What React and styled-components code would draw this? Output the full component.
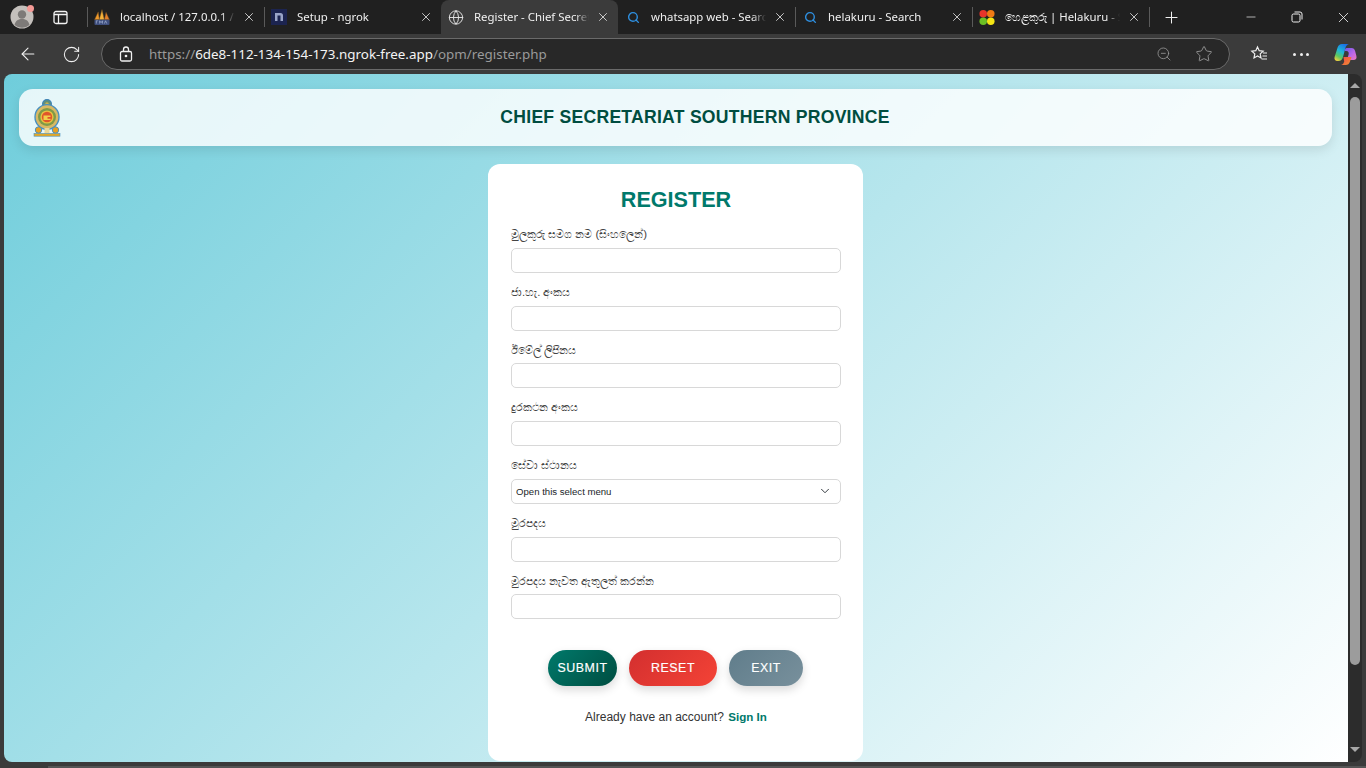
import React from 'react'
import styled, { createGlobalStyle } from 'styled-components'
import { ChevronDown, Globe, Search, X, Plus, RotateCw, ArrowLeft, ZoomOut, Star, Minus } from 'lucide-react'

const GlobalStyle = createGlobalStyle`
  html, body { margin: 0; padding: 0; height: 100%; overflow: hidden; background: #3b3b3b; }
  * { box-sizing: border-box; }
`

const PmaIcon = () => (
  <svg width="17" height="17" viewBox="0 0 17 17">
    <path d="M0.500 11 L4.500 2.500 L5.800 11Z" fill="#f09a2a" stroke="#6b4a20" strokeWidth="0.500" />
    <path d="M5.500 11 L8.500 0 L11 11Z" fill="#f6b23a" stroke="#6b4a20" strokeWidth="0.500" />
    <path d="M11 11 L12.800 3 L16.500 11Z" fill="#e4802a" stroke="#6b4a20" strokeWidth="0.500" />
    <rect x="0.500" y="11" width="16" height="5.500" rx="1" fill="#3f4f7e" />
    <path d="M2.500 15v-3h1.500M6 15v-3l1.500 2 1.500-2v3M11 15l1.300-3 1.300 3" fill="none" stroke="#aab8d8" strokeWidth="0.700" />
  </svg>
)

const NgrokIcon = () => (
  <NgrokBox>
    <svg width="10" height="10" viewBox="0 0 10 10">
      <path d="M1 9V1h5.500a2.500 2.500 0 0 1 2.500 2.500V9H6.500V3.500H3.500V9Z" fill="#9aa5c8" />
    </svg>
  </NgrokBox>
)

const HelakuruIcon = () => (
  <svg width="17" height="17" viewBox="0 0 17 17">
    <circle cx="4.500" cy="4.500" r="4" fill="#e8342a" />
    <circle cx="12.500" cy="4.500" r="4" fill="#f07a14" />
    <circle cx="4.500" cy="12.500" r="4" fill="#6cc024" />
    <circle cx="12.500" cy="12.500" r="4" fill="#f4e414" />
  </svg>
)

const BlueSearch = () => <Search size={13} color="#2e8fe0" strokeWidth={2.6} />

const tabs = [
  { id: 1, title: 'localhost / 127.0.0.1 / localhost', icon: <PmaIcon /> },
  { id: 2, title: 'Setup - ngrok', icon: <NgrokIcon /> },
  { id: 3, title: 'Register - Chief Secretariat', icon: <Globe size={17} color="#e6e6e6" strokeWidth={1.4} />, active: true },
  { id: 4, title: 'whatsapp web - Search', icon: <BlueSearch />, inset: true, noSep: true },
  { id: 5, title: 'helakuru - Search', icon: <BlueSearch />, inset: true },
  { id: 6, title: 'හෙළකුරු | Helakuru - Sinhala', icon: <HelakuruIcon /> },
]

const fields = [
  { label: 'මුලකුරු සමග නම (සිංහලෙන්)' },
  { label: 'ජා.හැ. අංකය' },
  { label: 'ඊමේල් ලිපිනය' },
  { label: 'දුරකථන අංකය' },
  { label: 'සේවා ස්ථානය', select: true },
  { label: 'මුරපදය' },
  { label: 'මුරපදය නැවත ඇතුලත් කරන්න' },
]

const Emblem = () => (
  <svg width="28" height="38" viewBox="0 0 28 38">
    <circle cx="14" cy="5" r="4.400" fill="#5f8f7a" stroke="#3f83b5" strokeWidth="1.200" />
    <circle cx="14" cy="5" r="1.800" fill="#c9b24e" />
    <ellipse cx="14" cy="18" rx="12" ry="12.400" fill="#d8b964" stroke="#4a90c0" strokeWidth="1.400" />
    <circle cx="14" cy="18" r="9" fill="#7f9a48" />
    <circle cx="14" cy="18" r="6.600" fill="#e9c040" />
    <circle cx="14" cy="18" r="5.200" fill="#e0562a" />
    <path d="M10.500 16.500h7v1.600h-3v1.600h3v1.400h-7Z" fill="#f2cf4a" />
    <rect x="11.500" y="29" width="5" height="5" fill="#e8d79a" />
    <circle cx="5.500" cy="31" r="3.200" fill="#e8a020" stroke="#4a90c0" />
    <circle cx="22.500" cy="31" r="3.200" fill="#e8a020" stroke="#4a90c0" />
    <rect x="1" y="34.400" width="26" height="2.800" fill="#e0a828" stroke="#4a90c0" strokeWidth="0.600" />
  </svg>
)

const CopilotIcon = () => (
  <svg width="23" height="23" viewBox="0 0 23 23">
    <defs>
      <linearGradient id="cpA" x1="0.700" y1="0" x2="0.200" y2="1">
        <stop offset="0" stopColor="#1a6fe8" />
        <stop offset="0.450" stopColor="#1fb8d8" />
        <stop offset="0.750" stopColor="#5cc860" />
        <stop offset="1" stopColor="#f0d040" />
      </linearGradient>
      <linearGradient id="cpB" x1="0" y1="0" x2="1" y2="1">
        <stop offset="0" stopColor="#6a58e8" />
        <stop offset="0.600" stopColor="#c068e8" />
        <stop offset="1" stopColor="#f078b8" />
      </linearGradient>
      <linearGradient id="cpC" x1="0" y1="0" x2="1" y2="1">
        <stop offset="0" stopColor="#f04848" />
        <stop offset="1" stopColor="#f09030" />
      </linearGradient>
    </defs>
    <path d="M8 1h7c-2 .5-3 2-3.600 4L9 14c-.8 2.600-2 4-4.500 4h-1C1 18 0 16.200.6 14L3.600 4.500C4.300 2.200 5.800 1 8 1Z" fill="url(#cpA)" />
    <path d="M12.500 5h5c2 0 3 1 3.600 3L22.400 13c.6 2.400-.6 4-3 4h-6.400l1.600-5.500c.5-2-.3-3.500-2.300-3.500H10.500c.4-1.500 1-3 2-3Z" fill="url(#cpB)" />
    <path d="M9.500 14h8c-.3 1-.8 2.500-1.500 4.500-.8 2.400-2 3.500-4.500 3.500H7c2-.5 2.800-2 3.200-3.500Z" fill="url(#cpC)" />
  </svg>
)

const App = () => {
  return (
    <Shell>
      <GlobalStyle />
      <TabStrip>
        <Avatar>
          <svg width="24" height="24" viewBox="0 0 24 24">
            <circle cx="12" cy="12" r="11.500" fill="#c4c0bc" />
            <circle cx="12" cy="9.500" r="4.200" fill="#7d7a78" />
            <path d="M4.500 20c1-4.500 4-6 7.500-6s6.500 1.500 7.500 6a11.500 11.500 0 0 1-15 0Z" fill="#7d7a78" />
          </svg>
          <AvatarDot />
        </Avatar>
        <SideToggle>
          <svg width="15" height="15" viewBox="0 0 15 15" fill="none" stroke="#f2f2f2" strokeWidth="1.300">
            <rect x="1" y="1.500" width="13" height="12" rx="2" />
            <path d="M1 4.500h13M5.500 4.500v9" />
          </svg>
        </SideToggle>
        {tabs.map(t => (
          <Tab key={t.id} $active={t.active} $noSep={t.noSep}>
            <TabIcon $inset={t.inset}>{t.icon}</TabIcon>
            <TabTitle>{t.title}</TabTitle>
            <TabClose><X size={14} strokeWidth={1.4} color="#e8e8e8" /></TabClose>
          </Tab>
        ))}
        <NewTab><Plus size={19} strokeWidth={1.3} color="#f0f0f0" /></NewTab>
        <WindowControls>
          <WinBtn><Minus size={14} strokeWidth={1.2} color="#f0f0f0" /></WinBtn>
          <WinBtn>
            <svg width="12" height="12" viewBox="0 0 12 12" fill="none" stroke="#f0f0f0" strokeWidth="1">
              <rect x="1" y="3" width="8" height="8" rx="1.500" />
              <path d="M3.500 1h5.500a2 2 0 0 1 2 2v5.500" />
            </svg>
          </WinBtn>
          <WinBtn><X size={17} strokeWidth={1.2} color="#f0f0f0" /></WinBtn>
        </WindowControls>
      </TabStrip>

      <Toolbar>
        <ToolBtn><ArrowLeft size={20} strokeWidth={1.3} color="#f0f0f0" /></ToolBtn>
        <ToolBtn><RotateCw size={19} strokeWidth={1.3} color="#f0f0f0" /></ToolBtn>
        <Omnibox>
          <svg width="14" height="16" viewBox="0 0 14 16" fill="none" stroke="#f0f0f0" strokeWidth="1.300">
            <rect x="1.500" y="5.500" width="11" height="9.500" rx="1.500" />
            <path d="M4.500 5.500V3.500a2.500 2.500 0 0 1 5 0v2" />
            <circle cx="7" cy="10" r="0.700" fill="#f0f0f0" />
          </svg>
          <Url>
            <UrlDim>https://</UrlDim>6de8-112-134-154-173.ngrok-free.app<UrlDim>/opm/register.php</UrlDim>
          </Url>
          <ZoomOut size={16} strokeWidth={1.2} color="#9a9a9a" />
          <OmniStar><Star size={18} strokeWidth={1.2} color="#9a9a9a" /></OmniStar>
        </Omnibox>
        <ToolRight>
          <svg width="18" height="18" viewBox="0 0 18 18" fill="none" stroke="#f0f0f0" strokeWidth="1.200">
            <path d="M7.500 2l1.700 3.700 4 .5-3 2.700.8 4-3.500-2-3.500 2 .8-4-3-2.700 4-.5Z" />
            <path d="M13 8h4M12.500 11h4.500M11.500 14h5.500" />
          </svg>
          <Dots><Dot /><Dot /><Dot /></Dots>
          <CopilotIcon />
        </ToolRight>
      </Toolbar>

      <Viewport>
        <Page>
          <Header>
            <LogoSlot><Emblem /></LogoSlot>
            <HeaderTitle>CHIEF SECRETARIAT SOUTHERN PROVINCE</HeaderTitle>
          </Header>
          <Card>
            <CardTitle>REGISTER</CardTitle>
            <form onSubmit={e => e.preventDefault()}>
              {fields.map(f => (
                <Field key={f.label}>
                  <Label>{f.label}</Label>
                  {f.select ? (
                    <SelectWrap>
                      <Select defaultValue="">
                        <option value="">Open this select menu</option>
                      </Select>
                      <SelectArrow><ChevronDown size={14} strokeWidth={1.7} color="#343a40" /></SelectArrow>
                    </SelectWrap>
                  ) : (
                    <Input type="text" />
                  )}
                </Field>
              ))}
              <Buttons>
                <Button $from="#00796b" $to="#004d40" $w={69}>SUBMIT</Button>
                <Button $from="#d32f2f" $to="#f44336" $w={88}>RESET</Button>
                <Button $from="#607d8b" $to="#78909c" $w={74}>EXIT</Button>
              </Buttons>
            </form>
            <Footer>Already have an account? <SignIn href="#">Sign In</SignIn></Footer>
          </Card>
        </Page>
        <Scrollbar>
          <ScrollArrow />
          <ScrollThumb />
          <ScrollArrow $down />
        </Scrollbar>
      </Viewport>
      <BottomStrip />
    </Shell>
  )
}

export default App

const Shell = styled.div`
  width: 1366px;
  height: 768px;
  display: flex;
  flex-direction: column;
  background: #3b3b3b;
  overflow: hidden;
  font-family: "Noto Sans", "Open Sans", sans-serif;
`

const TabStrip = styled.div`
  height: 34px;
  background: #202020;
  display: flex;
  align-items: stretch;
  flex: none;
`

const Avatar = styled.div`
  position: relative;
  width: 44px;
  padding: 5px 0 0 10px;
`

const AvatarDot = styled.span`
  position: absolute;
  left: 27px;
  top: 5px;
  width: 7px;
  height: 7px;
  border-radius: 50%;
  background: #f49a96;
`

const SideToggle = styled.div`
  width: 43px;
  padding-left: 9px;
  display: flex;
  align-items: center;
`

const Tab = styled.div`
  width: 177px;
  position: relative;
  display: flex;
  align-items: center;
  padding-left: 7px;
  color: #f0f0f0;
  font-size: 11.4px;
  border-radius: 8px 8px 0 0;
  background: ${p => (p.$active ? '#3b3b3b' : 'transparent')};
  &::before {
    content: '';
    position: absolute;
    left: 0;
    top: 7px;
    height: 20px;
    width: 1px;
    background: ${p => (p.$active || p.$noSep ? 'transparent' : '#5a5a5a')};
  }
`

const TabIcon = styled.span`
  width: 16px;
  margin-right: 10px;
  flex: none;
  display: flex;
  justify-content: ${p => (p.$inset ? 'center' : 'flex-start')};
  align-items: center;
`

const NgrokBox = styled.span`
  width: 17px;
  height: 16px;
  background: #1c2450;
  display: flex;
  align-items: center;
  justify-content: center;
`

const TabTitle = styled.span`
  width: 115px;
  flex: none;
  padding-bottom: 2px;
  white-space: nowrap;
  overflow: hidden;
  -webkit-mask-image: linear-gradient(90deg, #000 88%, transparent);
  mask-image: linear-gradient(90deg, #000 88%, transparent);
`

const TabClose = styled.span`
  margin-left: 7px;
  display: flex;
  align-items: center;
`

const NewTab = styled.div`
  width: 44px;
  padding-left: 12px;
  display: flex;
  align-items: center;
  border-left: 1px solid #5a5a5a;
  margin: 7px 0;
`

const WindowControls = styled.div`
  margin-left: auto;
  display: flex;
`

const WinBtn = styled.div`
  width: 46px;
  display: flex;
  align-items: center;
  justify-content: center;
`

const Toolbar = styled.div`
  height: 40px;
  flex: none;
  display: flex;
  align-items: center;
  padding-left: 18px;
  background: #3b3b3b;
`

const ToolBtn = styled.div`
  width: 44px;
  display: flex;
  align-items: center;
`

const Omnibox = styled.div`
  width: 1129px;
  margin-left: -5px;
  height: 32px;
  display: flex;
  align-items: center;
  padding: 0 16px 0 17px;
  gap: 16px;
  background: #282828;
  border: 1px solid #6a6a6a;
  border-radius: 16px;
`

const Url = styled.div`
  flex: 1;
  color: #f4f4f4;
  font-size: 13.4px;
  white-space: nowrap;
`

const UrlDim = styled.span`
  color: #9a9a9a;
`

const OmniStar = styled.span`
  display: flex;
  margin-left: 7px;
`

const ToolRight = styled.div`
  display: flex;
  align-items: center;
  gap: 25px;
  padding-left: 20px;
`

const Dots = styled.div`
  width: 16px;
  display: flex;
  justify-content: space-between;
`

const Dot = styled.span`
  width: 3px;
  height: 3px;
  border-radius: 50%;
  background: #f0f0f0;
`

const Viewport = styled.div`
  height: 688px;
  flex: none;
  display: flex;
  padding-left: 4px;
`

const Page = styled.div`
  width: 1344px;
  height: 688px;
  overflow: hidden;
  border-radius: 8px 0 0 8px;
  padding: 15px 16px 0 15px;
  background: linear-gradient(135deg, #6fcddb 0%, #ffffff 100%);
  font-family: "Liberation Sans", Arial, sans-serif;
`

const Header = styled.header`
  height: 57px;
  display: flex;
  align-items: center;
  padding: 0 14px;
  border-radius: 14px;
  background: rgba(255, 255, 255, 0.82);
  box-shadow: 0 4px 12px rgba(0, 0, 0, 0.1);
`

const LogoSlot = styled.div`
  width: 39px;
  flex: none;
  display: flex;
`

const HeaderTitle = styled.h1`
  flex: 1;
  margin: 0;
  text-align: center;
  font-size: 17.6px;
  font-weight: 700;
  letter-spacing: 0.25px;
  color: #004d40;
`

const Card = styled.main`
  width: 375px;
  height: 597px;
  margin: 18px auto 0;
  padding: 21px 22px 0 23px;
  background: #fff;
  border-radius: 12px;
`

const CardTitle = styled.h2`
  margin: 0 0 8.3px;
  height: 30px;
  line-height: 30px;
  text-align: center;
  font-size: 21.6px;
  font-weight: 700;
  color: #00796b;
`

const Field = styled.div`
  margin-bottom: 8.03px;
`

const Label = styled.label`
  display: block;
  height: 20.7px;
  padding-top: 3px;
  line-height: 17.7px;
  margin-bottom: 4px;
  font-size: 11.4px;
  color: #444;
`

const Input = styled.input`
  display: block;
  width: 100%;
  height: 25px;
  padding: 0 5px;
  background: #fff;
  border: 1px solid #d8d8d8;
  border-radius: 5px;
  outline: none;
`

const SelectWrap = styled.div`
  position: relative;
`

const Select = styled.select`
  display: block;
  width: 100%;
  height: 25px;
  padding: 0 4px;
  appearance: none;
  background: #fff;
  border: 1px solid #d8d8d8;
  border-radius: 5px;
  font-family: "Liberation Sans", Arial, sans-serif;
  font-size: 9.6px;
  color: #212529;
  outline: none;
`

const SelectArrow = styled.span`
  position: absolute;
  right: 9px;
  top: 5px;
  display: flex;
  pointer-events: none;
`

const Buttons = styled.div`
  display: flex;
  justify-content: center;
  gap: 12px;
  margin-top: 31px;
  padding-right: 1px;
`

const Button = styled.button`
  width: ${p => p.$w}px;
  height: 36px;
  padding: 0;
  border: 0;
  border-radius: 18px;
  font-family: "Liberation Sans", Arial, sans-serif;
  font-size: 12.4px;
  font-weight: 400;
  letter-spacing: 0.55px;
  -webkit-text-stroke: 0.15px #fff;
  color: #fff;
  background: linear-gradient(135deg, ${p => p.$from}, ${p => p.$to});
  box-shadow: 0 4px 10px rgba(0, 0, 0, 0.15);
`

const Footer = styled.p`
  margin: 24px 0 0;
  line-height: 14px;
  text-align: center;
  font-size: 12px;
  color: #333;
`

const SignIn = styled.a`
  margin-left: 1px;
  font-size: 11.6px;
  color: #00796b;
  font-weight: 700;
  text-decoration: none;
`

const Scrollbar = styled.div`
  width: 14px;
  height: 688px;
  background: #2c2c2c;
  border-radius: 0 8px 8px 0;
  display: flex;
  flex-direction: column;
  align-items: center;
  padding: 9px 0 10px;
`

const ScrollArrow = styled.span`
  width: 0;
  height: 0;
  border-left: 5px solid transparent;
  border-right: 5px solid transparent;
  ${p => (p.$down ? 'border-top: 5px solid #a8a8a8; margin-top: auto;' : 'border-bottom: 5px solid #a8a8a8;')}
`

const ScrollThumb = styled.span`
  width: 10px;
  height: 568px;
  margin-top: 9px;
  border-radius: 5px;
  background: #9c9c9c;
`

const BottomStrip = styled.div`
  height: 2px;
  margin-top: 4px;
  margin-left: 48px;
  background: #555;
  flex: none;
`
